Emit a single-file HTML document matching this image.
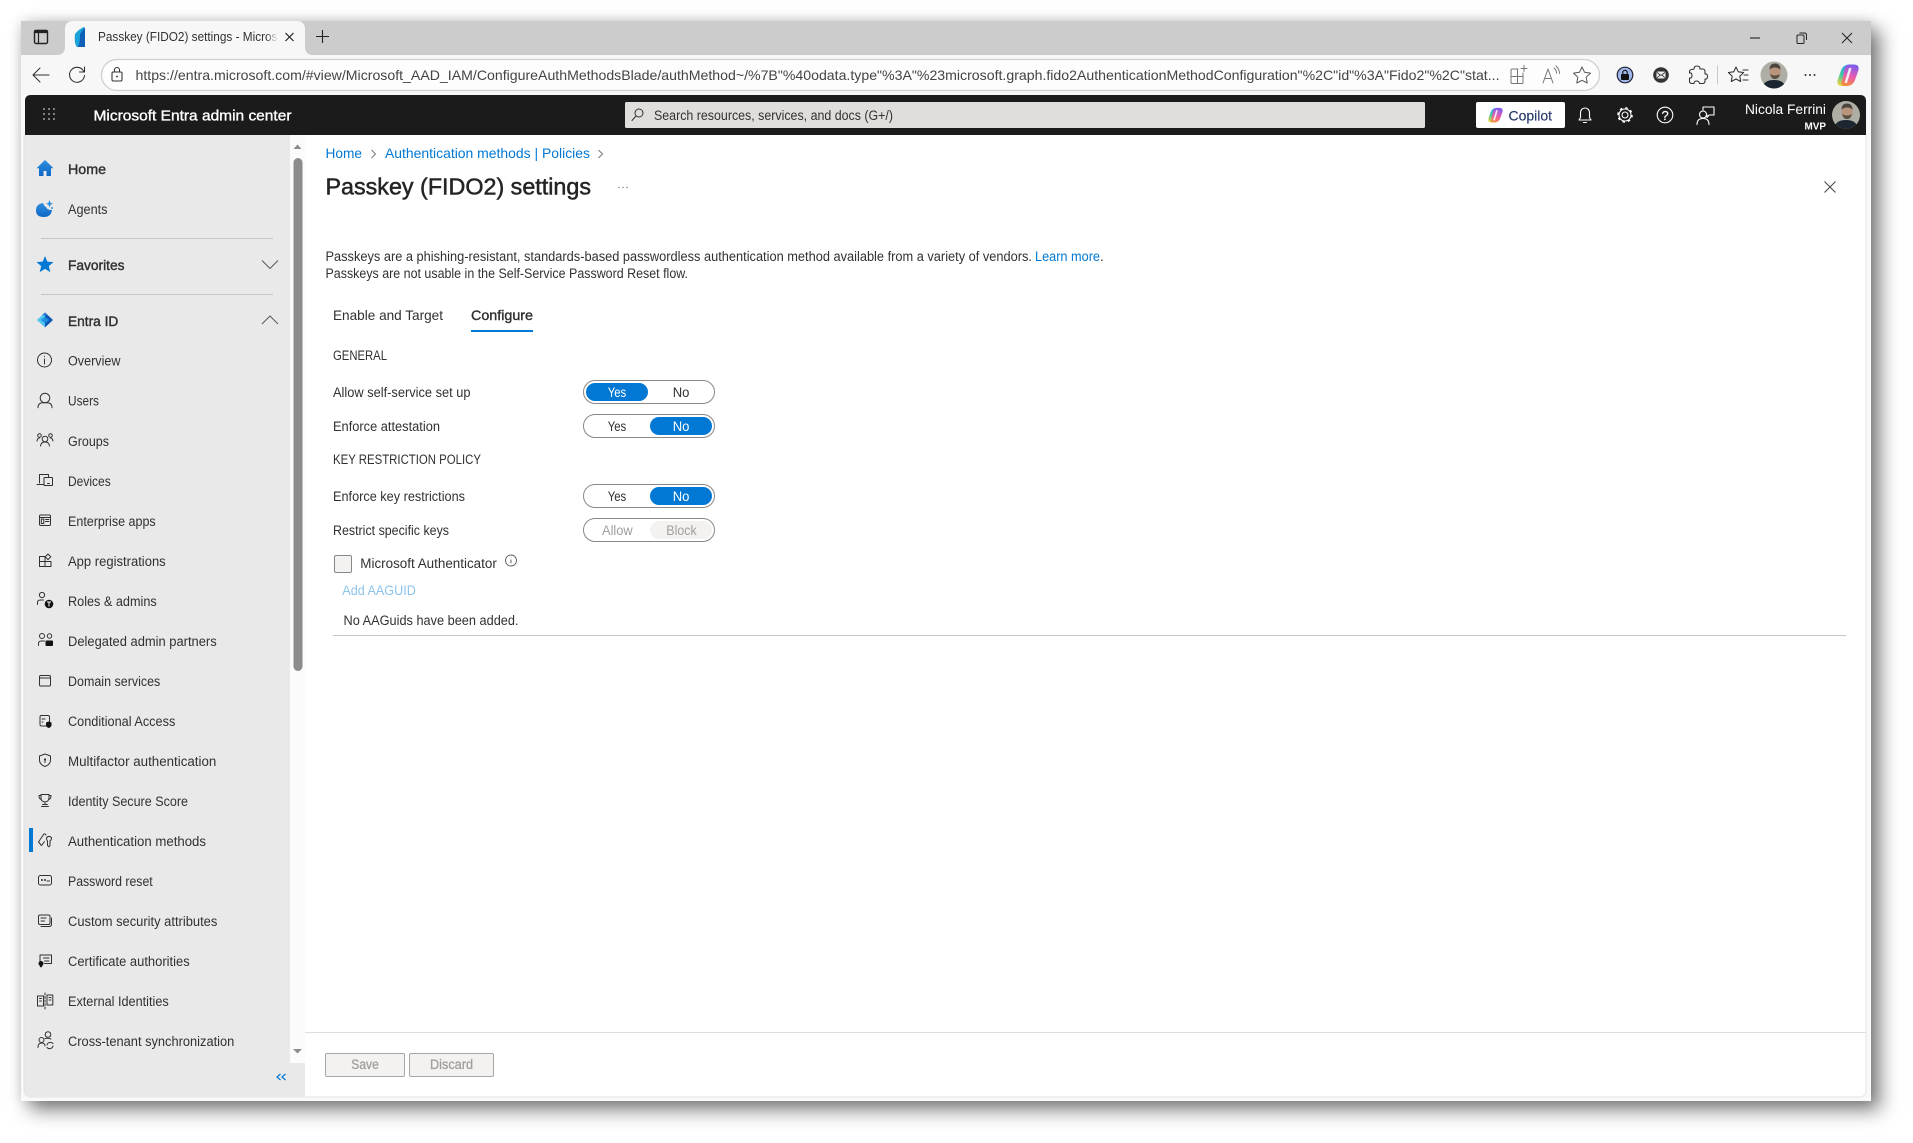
<!DOCTYPE html>
<html lang="en"><head><meta charset="utf-8"><title>Passkey (FIDO2) settings</title>
<style>
html,body{margin:0;padding:0;background:#fff;width:1913px;height:1143px;overflow:hidden}
#win{position:absolute;left:21px;top:21px;width:1850px;height:1080px;background:#f9f9f9;box-shadow:9px 9px 18px rgba(0,0,0,.5),0 0 12px rgba(0,0,0,.14)}
svg{position:absolute;left:0;top:0;display:block}
text{font-family:"Liberation Sans",sans-serif;font-size:13.5px;fill:#323130}
.s{stroke:#323130;stroke-width:.4}
.w{fill:#fff}
.l{fill:#0078d4}
.i{fill:none;stroke:#323130;stroke-width:1;stroke-linecap:round;stroke-linejoin:round}
.wi{fill:none;stroke:#fff;stroke-width:1.1;stroke-linecap:round;stroke-linejoin:round}
.t{fill:none;stroke:#303030;stroke-width:1.05;stroke-linecap:round;stroke-linejoin:round}
</style></head><body>
<div id="win"></div>
<svg width="1913" height="1143" viewBox="0 0 1913 1143" xmlns="http://www.w3.org/2000/svg">
<defs>
<linearGradient id="cp" x1="0.6" y1="0" x2="0.2" y2="1"><stop offset="0" stop-color="#2a9df0"/><stop offset=".55" stop-color="#42c8a0"/><stop offset="1" stop-color="#f2d23c"/></linearGradient>
<linearGradient id="cp2" x1="0.6" y1="0" x2="0.4" y2="1"><stop offset="0" stop-color="#7a5cf0"/><stop offset=".55" stop-color="#e85cb0"/><stop offset="1" stop-color="#f58a3a"/></linearGradient>
<linearGradient id="fade" x1="0" x2="1"><stop offset="0" stop-color="#f7f7f7" stop-opacity="0"/><stop offset="1" stop-color="#f7f7f7"/></linearGradient>
<linearGradient id="hb" x1="0" y1="0" x2="0" y2="1"><stop offset="0" stop-color="#2d8fe0"/><stop offset="1" stop-color="#0f66c4"/></linearGradient>
<clipPath id="a1"><circle cx="1774" cy="75" r="13.5"/></clipPath>
<clipPath id="a2"><circle cx="1846" cy="115" r="14"/></clipPath>
<clipPath id="tb"><rect x="98" y="25" width="180" height="24"/></clipPath>
</defs>

<!-- tab strip -->
<rect x="21" y="21" width="1850" height="34" fill="#cccccc"/>
<path d="M57 55c5 0 8-3 8-8V29c0-5 3-8 8-8h224c5 0 8 3 8 8v18c0 5 3 8 8 8z" fill="#f7f7f7"/>
<rect x="34.500" y="30.500" width="13" height="13" rx="1.500" fill="none" stroke="#222" stroke-width="1.400"/>
<path d="M34.500 32.500h13V31.500q0-1-1-1h-11q-1 0-1 1zM38.500 32v11" fill="#222" stroke="#222" stroke-width="1.200"/>
<path d="M75 34q4-5 9-7v19q-4 1-7 1q-3-3-2-13z" fill="#19a3d8"/>
<path d="M80 34l5-7v20h-8q3-1 3-13z" fill="#0f5fb8"/>
<text x="98" y="41" textLength="179.500" lengthAdjust="spacingAndGlyphs" clip-path="url(#tb)" style="font-size:13px">Passkey (FIDO2) settings - Micros</text>
<rect x="266" y="26" width="12" height="22" fill="url(#fade)"/>
<path d="M285.500 33l8 8M293.500 33l-8 8" fill="none" stroke="#222" stroke-width="1.200"/>
<path d="M322.500 30v13M316 36.500h13" fill="none" stroke="#222" stroke-width="1.100"/>
<path d="M1750 38h10" stroke="#222" stroke-width="1.100" fill="none"/>
<path d="M1797 36v6.500q0 1 1 1h5q1 0 1-1V36q0-1-1-1h-5q-1 0-1 1zM1799.500 33h5q2 0 2 2v5" fill="none" stroke="#222" stroke-width="1"/>
<path d="M1842 33l10 10M1852 33l-10 10" stroke="#222" stroke-width="1" fill="none"/>

<!-- toolbar -->
<rect x="21" y="55" width="1850" height="40" fill="#f7f7f7"/>
<path d="M33 75h16M33 75l7-7M33 75l7 7" class="t"/>
<path d="M83.500 71a7.500 7.500 0 1 0 1 4.500M84.500 67v5h-5" class="t"/>
<rect x="101.500" y="59.500" width="1498" height="31" rx="15.500" fill="#fdfdfd" stroke="#cfcfcf" stroke-width="1.300"/>
<rect x="112" y="72" width="10" height="9" rx="1.200" class="t"/><path d="M114.500 72v-2a2.500 2.500 0 0 1 5 0v2" class="t"/><circle cx="117" cy="76.500" r=".9" fill="#303030"/>
<text x="135.500" y="80" style="font-size:14px;fill:#444" textLength="1364" lengthAdjust="spacingAndGlyphs">https://entra.microsoft.com/#view/Microsoft_AAD_IAM/ConfigureAuthMethodsBlade/authMethod~/%7B"%40odata.type"%3A"%23microsoft.graph.fido2AuthenticationMethodConfiguration"%2C"id"%3A"Fido2"%2C"stat...</text>
<g class="i" style="stroke:#777"><path d="M1523 73v9.500q0 1-1 1h-10q-1 0-1-1V70q0-1 1-1h6M1511 76.500h12M1517.500 69v14.500M1524 65.500v6M1521 68.500h6"/>
<path d="M1543 83l5-14 5 14M1545 78.500h6M1554 68q2.500 2 2.500 5M1556 66q3.500 3 3.500 7.500"/></g>
<path d="M1582 67l2.600 5.300 5.900.8-4.300 4.100 1 5.800-5.200-2.700-5.200 2.700 1-5.800-4.300-4.100 5.900-.8z" class="t" style="stroke:#555;stroke-width:1"/>
<circle cx="1625" cy="75" r="7.800" fill="#9db8e8" stroke="#223" stroke-width="1.200"/><rect x="1621" y="74" width="8" height="6" rx="1" fill="#111"/><path d="M1622.800 74v-1.500a2.200 2.200 0 0 1 4.400 0V74" fill="none" stroke="#111" stroke-width="1.100"/>
<circle cx="1661" cy="75" r="7.800" fill="#333"/><rect x="1656.500" y="71.500" width="9" height="7" rx="1.500" fill="#eee"/><path d="M1657 72.500l4 3 4-3M1657 78l3-3M1665 78l-3-3" stroke="#333" stroke-width=".8" fill="none"/>
<path d="M1694 69q0-3 3-3t3 3h2.500q2.500 0 2.500 2.500V74q2.500-.5 2.500 2.500t-2.500 2.500v2q0 2.500-2.500 2.500h-3q-.5-2.500-3-2.500t-2.500 2.500h-2q-2.500 0-2.500-2.500v-3q2.500 .5 2.500-2.500t-2.500-2.500v-1q0-2.500 2.500-2.500z" class="t"/>
<path d="M1717.500 65.500v19" stroke="#c8c8c8" fill="none"/>
<path d="M1736 67l2.300 4.800 5.300.7-3.800 3.700.9 5.300-4.700-2.500-4.700 2.500.9-5.300-3.800-3.700 5.300-.7zM1743 70h5M1744 75h4M1743 80h5" class="t"/>
<g clip-path="url(#a1)"><rect x="1760" y="61" width="28" height="28" fill="#aeaea4"/><path d="M1762 89q1-9 12-9t12 9z" fill="#1c2630"/><ellipse cx="1775" cy="72" rx="5.500" ry="6.500" fill="#b8957a"/><path d="M1769.500 70q0-6.500 5.500-6.500t5.500 6.500q-1.500-2.500-5.500-2.500t-5.500 2.500z" fill="#4a443e"/><path d="M1770 74q1 5 5 5t5-5q-2 1.500-5 1.500t-5-1.500z" fill="#5a4d42"/></g>
<circle cx="1805.500" cy="75" r="1" fill="#333"/><circle cx="1810" cy="75" r="1" fill="#333"/><circle cx="1814.500" cy="75" r="1" fill="#333"/>
<g id="cop"><path d="M1850 64.500q-7 0-9 6l-3.500 10q-1 5 4 5.500h5q4 0 5-5l3-14q.5-2.500-4.500-2.500z" fill="url(#cp)"/>
<path d="M1846 86q7 0 9-6l3.500-10q1-5-4-5.500h-5q-4 0-5 5l-3 14q-.5 2.500 4.500 2.500z" fill="url(#cp2)"/>
<path d="M1850 69l-4 13" stroke="#fff" stroke-width="2.500" stroke-linecap="round" fill="none" opacity=".85"/></g>

<!-- header -->
<path d="M25 135v-34q0-6 6-6h1829q6 0 6 6v34z" fill="#1b1b1b"/>
<g fill="#c8c8c8"><circle cx="44" cy="109" r=".9"/><circle cx="49" cy="109" r=".9"/><circle cx="54" cy="109" r=".9"/><circle cx="44" cy="114" r=".9"/><circle cx="49" cy="114" r=".9"/><circle cx="54" cy="114" r=".9"/><circle cx="44" cy="119" r=".9"/><circle cx="49" cy="119" r=".9"/><circle cx="54" cy="119" r=".9"/></g>
<text x="93.500" y="120.500" class="w" style="font-size:14.500px;stroke:#fff;stroke-width:.35" textLength="198" lengthAdjust="spacingAndGlyphs">Microsoft Entra admin center</text>
<rect x="625" y="102" width="800" height="26" rx="1.500" fill="#dfdedc"/>
<circle cx="639" cy="113" r="4" class="i"/><path d="M636 116l-4 4.500" class="i"/>
<text x="654" y="120" style="font-size:13.500px" textLength="239" lengthAdjust="spacingAndGlyphs">Search resources, services, and docs (G+/)</text>
<rect x="1476" y="102" width="89" height="26" rx="2" fill="#fff"/>
<g transform="translate(1495.500 115) scale(.68) translate(-1848 -75)"><path d="M1850 64.500q-7 0-9 6l-3.500 10q-1 5 4 5.500h5q4 0 5-5l3-14q.5-2.500-4.500-2.500z" fill="url(#cp)"/>
<path d="M1846 86q7 0 9-6l3.500-10q1-5-4-5.500h-5q-4 0-5 5l-3 14q-.5 2.500 4.500 2.500z" fill="url(#cp2)"/>
<path d="M1850 69l-4 13" stroke="#fff" stroke-width="2.500" stroke-linecap="round" fill="none" opacity=".85"/></g>
<text x="1508.500" y="120.500" style="font-size:14px;fill:#243a6b;stroke:#243a6b;stroke-width:.15" textLength="43.500" lengthAdjust="spacingAndGlyphs">Copilot</text>
<path d="M1579 120h12l-1.500-2.500v-5a4.500 4.500 0 0 0-9 0v5zM1583.500 122.500h3" class="wi"/>
<circle cx="1625" cy="115" r="3" class="wi"/><circle cx="1625" cy="115" r="6" class="wi"/><circle cx="1625" cy="115" r="7" fill="none" stroke="#fff" stroke-width="1.600" stroke-dasharray="2.500 3"/>
<circle cx="1665" cy="115" r="7.800" class="wi"/><text x="1661.500" y="119.800" class="w" style="font-size:13px;stroke:#fff;stroke-width:.2">?</text>
<path d="M1703 107h11v8h-5l-2 2.500V115M1703 107v3" class="wi"/><circle cx="1703" cy="114.500" r="3.500" class="wi"/><path d="M1697 124.500q0-6 6-6t6 6" class="wi"/>
<text x="1745" y="114" class="w" style="font-size:13.500px" textLength="81" lengthAdjust="spacingAndGlyphs">Nicola Ferrini</text>
<text x="1804.500" y="129.500" class="w" style="font-size:10.500px;font-weight:bold" textLength="21.500" lengthAdjust="spacingAndGlyphs">MVP</text>
<g clip-path="url(#a2)"><rect x="1832" y="101" width="28" height="28" fill="#aeaea4"/><path d="M1834 129q1-9 12-9t12 9z" fill="#1c2630"/><ellipse cx="1847" cy="112" rx="5.500" ry="6.500" fill="#b8957a"/><path d="M1841.500 110q0-6.500 5.500-6.500t5.500 6.500q-1.500-2.500-5.500-2.500t-5.500 2.500z" fill="#4a443e"/><path d="M1842 114q1 5 5 5t5-5q-2 1.500-5 1.500t-5-1.500z" fill="#5a4d42"/></g>

<!-- content background -->
<path d="M24 135h1842v955q0 7-7 7H31q-7 0-7-7z" fill="#fff"/>
<path d="M24 135v955q0 7 7 7h1828q7 0 7-7V135" fill="none" stroke="#e4e4e4" stroke-width="1"/>

<!-- sidebar -->
<path d="M24.500 135H290v928h15v34H31q-6.500 0-6.500-7z" fill="#e9e9e9"/>
<rect x="290" y="135" width="15" height="928" fill="#fbfbfb"/>
<path d="M297.500 144.500l4 4.500h-8z" fill="#8c8c8c"/>
<rect x="293.500" y="158" width="9" height="513" rx="4.500" fill="#8c8c8c"/>
<path d="M293 1049h9l-4.500 4.500z" fill="#8c8c8c"/>
<path d="M280.500 1074l-3.500 3 3.500 3M285.500 1074l-3.500 3 3.500 3" fill="none" stroke="#0078d4" stroke-width="1.200"/>

<path d="M45 160l-8.500 8.200h2.500v7.800h4.500v-5h3v5h4.500v-7.800h2.500z" fill="url(#hb)"/>
<text x="68" y="174" class="s" textLength="38" lengthAdjust="spacingAndGlyphs">Home</text>
<path d="M43 203q-7 1-7 7.500q0 6.500 8 6.500q7 0 8-7q-5 0-6-3q-2-1-3-4z" fill="url(#hb)"/><path d="M49.500 200l1 2.800 2.500 1-2.500 1-1 2.800-1-2.800-2.500-1 2.500-1z" fill="#2d8fe0"/><circle cx="52" cy="208" r="1" fill="#2d8fe0"/>
<text x="68" y="214" textLength="39.500" lengthAdjust="spacingAndGlyphs">Agents</text>
<path d="M41 238.500h232" stroke="#c6c6c6" fill="none"/>
<path d="M45 256l2.300 5.600 6.200.5-4.700 4 1.500 6-5.300-3.200-5.300 3.200 1.500-6-4.700-4 6.200-.5z" fill="#0078d4"/>
<text x="68" y="270" class="s" textLength="56.500" lengthAdjust="spacingAndGlyphs">Favorites</text>
<path d="M262 260.500l8 8 8-8" fill="none" stroke="#605e5c" stroke-width="1.100"/>
<path d="M41 294.500h232" stroke="#c6c6c6" fill="none"/>
<path d="M37 320l8-7.500v15z" fill="#4cc3f2"/><path d="M45 312.500l8 7.500-8 7.500z" fill="#0a5bb5"/><path d="M41 320l4-3 4 3-4 3z" fill="#1f8fe0"/><path d="M45 312.500l-3 2.800 6 0z" fill="#2b79d0"/>
<text x="68" y="326" class="s" textLength="50.300" lengthAdjust="spacingAndGlyphs">Entra ID</text>
<path d="M262 324l8-8 8 8" fill="none" stroke="#605e5c" stroke-width="1.100"/>

<circle cx="44.500" cy="360" r="7" class="i"/><path d="M44.500 359v5M44.500 356.200v.3" class="i"/>
<text x="68" y="365.500" textLength="52.500" lengthAdjust="spacingAndGlyphs">Overview</text>
<circle cx="45" cy="398" r="4.800" class="i"/><path d="M38 407.800q0-5 5-5h4q5 0 5 5" class="i"/>
<text x="68" y="405.500" textLength="31" lengthAdjust="spacingAndGlyphs">Users</text>
<circle cx="45" cy="439" r="2.800" class="i"/><circle cx="39.500" cy="435.500" r="1.800" class="i"/><circle cx="50.500" cy="435.500" r="1.800" class="i"/><path d="M40.500 446q.5-4 4.500-4t4.500 4M37 441q.5-3 2.500-3M53 441q-.5-3-2.500-3" class="i"/>
<text x="68" y="446" textLength="41" lengthAdjust="spacingAndGlyphs">Groups</text>
<path d="M39.500 483v-8.500h9v3M37 484.500h7" class="i"/><rect x="44" y="477.500" width="8.500" height="8" rx=".8" class="i"/><path d="M47.500 483.500h2" class="i"/>
<text x="68" y="486" textLength="42.700" lengthAdjust="spacingAndGlyphs">Devices</text>
<rect x="39.500" y="515" width="11" height="10.500" rx="1.200" class="i"/><path d="M39.500 517.500h11" class="i"/><rect x="41.300" y="519" width="2.500" height="4.500" class="i"/><path d="M45.500 519.500h3.500M45.500 521.500h3.500" class="i"/>
<text x="68" y="526" textLength="87.700" lengthAdjust="spacingAndGlyphs">Enterprise apps</text>
<path d="M39.500 556.500h5.500v10h-5.500zM45 561.500h6v5h-6zM39.500 561.500H45M48 554l2.800 2.800-2.800 2.800-2.800-2.800z" class="i"/>
<text x="68" y="566" textLength="97.700" lengthAdjust="spacingAndGlyphs">App registrations</text>
<circle cx="42" cy="595" r="2.600" class="i"/><path d="M37.500 604.500v-2q0-2.500 3-2.500h3" class="i"/><circle cx="49" cy="604" r="4.300" fill="#111"/><path d="M47 602h4M49 602v4.500" stroke="#fff" stroke-width="1" fill="none"/>
<text x="68" y="606" textLength="88.700" lengthAdjust="spacingAndGlyphs">Roles &amp; admins</text>
<circle cx="42" cy="636" r="2.500" class="i"/><circle cx="49.500" cy="636" r="2.200" class="i"/><path d="M38.500 645.500v-2q0-2.500 3-2.500h3" class="i"/><rect x="45.500" y="640.500" width="7.500" height="5.500" rx="1" fill="#111"/>
<text x="68" y="646" textLength="148.700" lengthAdjust="spacingAndGlyphs">Delegated admin partners</text>
<rect x="39.500" y="675.500" width="11" height="10.500" rx="1.300" class="i"/><path d="M39.500 678h11" class="i"/>
<text x="68" y="686" textLength="92.300" lengthAdjust="spacingAndGlyphs">Domain services</text>
<rect x="40" y="715.500" width="9.500" height="10.500" rx="1.500" class="i"/><path d="M42 719h3M42 722h1" class="i"/><path d="M46 722.500l2.800-1 2.700 1v2.500q0 2-2.700 3-2.800-1-2.800-3z" fill="#111"/>
<text x="68" y="726" textLength="107.300" lengthAdjust="spacingAndGlyphs">Conditional Access</text>
<path d="M45 754l5.500 2v4q0 4.500-5.500 6.500-5.500-2-5.500-6.500v-4z" class="i"/><circle cx="45" cy="759.500" r="1.100" fill="#323130"/><path d="M45 760v2.500" class="i"/>
<text x="68" y="766" textLength="148.300" lengthAdjust="spacingAndGlyphs">Multifactor authentication</text>
<path d="M41 794.500h8v3q0 4-4 4.500-4-.5-4-4zM41 795.500h-2q0 3.500 2.300 4M49 795.500h2q0 3.500-2.300 4M45 802v2.500M41.500 806.500h7M42.500 804.500h5" class="i"/>
<text x="68" y="806" textLength="120" lengthAdjust="spacingAndGlyphs">Identity Secure Score</text>
<path d="M38.500 842l5-7.500q1-1.500 2.500.5M41.500 845.500l-3-3.500M41.500 845.500l3-4" class="i"/><path d="M46.500 838a2.700 2.700 0 0 1 5 0q0 2-1.500 3v4.500l-1 1.300-1.500-1.300V841q-1-1-1-3z" class="i"/>
<text x="68" y="846" textLength="138" lengthAdjust="spacingAndGlyphs">Authentication methods</text>
<rect x="29" y="828" width="4" height="24" fill="#0078d4"/>
<rect x="38.500" y="875.500" width="13" height="9.500" rx="2" class="i"/><circle cx="42" cy="880" r="1" fill="#323130"/><circle cx="45" cy="880" r="1" fill="#323130"/><path d="M47 881h2.500" class="i"/>
<text x="68" y="886" textLength="84.700" lengthAdjust="spacingAndGlyphs">Password reset</text>
<rect x="38.500" y="915" width="11.500" height="9.500" rx="1.500" class="i"/><path d="M41 918h5M41 921h3.500M51.500 918v6q0 2.500-2.500 2.500H41" class="i"/>
<text x="68" y="926" textLength="149.300" lengthAdjust="spacingAndGlyphs">Custom security attributes</text>
<path d="M40 963v-8h11.500v8.500H44.500M43.500 958h5.500M44.500 961h4.500" class="i"/><circle cx="41" cy="963.500" r="2.500" fill="#111"/><path d="M39.700 965l.3 2.500 1-.7 1 .7.300-2.500" fill="#111"/>
<text x="68" y="966" textLength="121.700" lengthAdjust="spacingAndGlyphs">Certificate authorities</text>
<rect x="37.500" y="996" width="6" height="10" class="i"/><rect x="47" y="995" width="5.800" height="10" class="i"/><path d="M39.500 998.500h2M39.500 1001h2M49 997.500h2M49 1000h2" class="i"/><path d="M45 993v16" class="i" stroke-dasharray="2 1.500"/>
<text x="68" y="1006" textLength="100.700" lengthAdjust="spacingAndGlyphs">External Identities</text>
<circle cx="48" cy="1034.500" r="2.800" class="i"/><circle cx="41.500" cy="1040" r="2.500" class="i"/><path d="M38 1047.500q0-4.500 3.500-4.500t3.500 3M45 1038.500q3-.7 6 .5" class="i"/><path d="M47 1045a3.500 3.500 0 0 1 6-1.500M53 1046a3.500 3.500 0 0 1-6 1.500" class="i"/>
<text x="68" y="1046" textLength="166.300" lengthAdjust="spacingAndGlyphs">Cross-tenant synchronization</text>

<!-- main -->
<text x="325.500" y="158" class="l" style="font-size:14px" textLength="36.500" lengthAdjust="spacingAndGlyphs">Home</text>
<path d="M371.500 150l4 4-4 4" fill="none" stroke="#777" stroke-width="1"/>
<text x="385" y="158" class="l" style="font-size:14px" textLength="205" lengthAdjust="spacingAndGlyphs">Authentication methods | Policies</text>
<path d="M598.500 150l4 4-4 4" fill="none" stroke="#777" stroke-width="1"/>
<text x="325.500" y="194.500" style="font-size:23.500px;fill:#252423;stroke:#252423;stroke-width:.5" textLength="265.500" lengthAdjust="spacingAndGlyphs">Passkey (FIDO2) settings</text>
<circle cx="619" cy="187.500" r=".7" fill="#777"/><circle cx="623" cy="187.500" r=".7" fill="#777"/><circle cx="627" cy="187.500" r=".7" fill="#777"/>
<path d="M1824.500 181.500l11 11M1835.500 181.500l-11 11" fill="none" stroke="#444" stroke-width="1"/>

<text x="325.500" y="261" textLength="706.500" lengthAdjust="spacingAndGlyphs">Passkeys are a phishing-resistant, standards-based passwordless authentication method available from a variety of vendors.</text>
<text x="1035" y="261" class="l" textLength="65" lengthAdjust="spacingAndGlyphs">Learn more</text><text x="1100" y="261">.</text>
<text x="325.500" y="278" textLength="362.500" lengthAdjust="spacingAndGlyphs">Passkeys are not usable in the Self-Service Password Reset flow.</text>

<text x="333" y="320" style="font-size:14px" textLength="110" lengthAdjust="spacingAndGlyphs">Enable and Target</text>
<text x="471" y="320" class="s" style="font-size:14px" textLength="62" lengthAdjust="spacingAndGlyphs">Configure</text>
<rect x="471" y="330" width="62" height="2" fill="#0078d4"/>

<text x="333" y="360" textLength="54" lengthAdjust="spacingAndGlyphs">GENERAL</text>

<text x="333" y="397" textLength="137.500" lengthAdjust="spacingAndGlyphs">Allow self-service set up</text>
<rect x="583.500" y="380.500" width="131" height="23" rx="11.500" fill="#fff" stroke="#8a8886"/>
<rect x="586" y="383" width="62" height="18" rx="9" fill="#0078d4"/>
<text x="607.700" y="397" class="w" textLength="18.500" lengthAdjust="spacingAndGlyphs">Yes</text>
<text x="672.700" y="397" textLength="16.700" lengthAdjust="spacingAndGlyphs">No</text>

<text x="333" y="431" textLength="107" lengthAdjust="spacingAndGlyphs">Enforce attestation</text>
<rect x="583.500" y="414.500" width="131" height="23" rx="11.500" fill="#fff" stroke="#8a8886"/>
<rect x="650" y="417" width="62" height="18" rx="9" fill="#0078d4"/>
<text x="607.700" y="431" textLength="18.500" lengthAdjust="spacingAndGlyphs">Yes</text>
<text x="672.700" y="431" class="w" textLength="16.700" lengthAdjust="spacingAndGlyphs">No</text>

<text x="333" y="464" textLength="148" lengthAdjust="spacingAndGlyphs">KEY RESTRICTION POLICY</text>

<text x="333" y="501" textLength="132" lengthAdjust="spacingAndGlyphs">Enforce key restrictions</text>
<rect x="583.500" y="484.500" width="131" height="23" rx="11.500" fill="#fff" stroke="#8a8886"/>
<rect x="650" y="487" width="62" height="18" rx="9" fill="#0078d4"/>
<text x="607.700" y="501" textLength="18.500" lengthAdjust="spacingAndGlyphs">Yes</text>
<text x="672.700" y="501" class="w" textLength="16.700" lengthAdjust="spacingAndGlyphs">No</text>

<text x="333" y="535" textLength="116" lengthAdjust="spacingAndGlyphs">Restrict specific keys</text>
<rect x="583.500" y="518.500" width="131" height="23" rx="11.500" fill="#fff" stroke="#8a8886"/>
<rect x="650" y="521" width="62" height="18" rx="9" fill="#f3f2f1"/>
<text x="602" y="535" style="fill:#a19f9d" textLength="30.700" lengthAdjust="spacingAndGlyphs">Allow</text>
<text x="666.300" y="535" style="fill:#a19f9d" textLength="30.400" lengthAdjust="spacingAndGlyphs">Block</text>

<rect x="334.500" y="555.500" width="17" height="17" rx="1.500" fill="#f3f2f1" stroke="#8a8886"/>
<text x="360.300" y="568" textLength="136.500" lengthAdjust="spacingAndGlyphs">Microsoft Authenticator</text>
<circle cx="511" cy="560.500" r="5.500" fill="none" stroke="#605e5c" stroke-width=".9"/><path d="M511 559.500v3.800M511 557.800v.2" fill="none" stroke="#605e5c"/>
<text x="342.300" y="595" style="fill:#8cc3ea" textLength="73.500" lengthAdjust="spacingAndGlyphs">Add AAGUID</text>
<text x="343.500" y="625" textLength="175" lengthAdjust="spacingAndGlyphs">No AAGuids have been added.</text>
<path d="M333 635.500h1513" stroke="#c8c6c4" fill="none"/>

<path d="M305 1032.500h1561" stroke="#e1dfdd" fill="none"/>
<rect x="325.500" y="1053.500" width="79" height="23" rx="1.500" fill="#f3f2f1" stroke="#a8a6a4"/>
<text x="351.300" y="1069" class="s" style="fill:#a19f9d;stroke:#a19f9d;stroke-width:.3" textLength="27.500" lengthAdjust="spacingAndGlyphs">Save</text>
<rect x="409.500" y="1053.500" width="84" height="23" rx="1.500" fill="#f3f2f1" stroke="#a8a6a4"/>
<text x="430" y="1069" class="s" style="fill:#a19f9d;stroke:#a19f9d;stroke-width:.3" textLength="43" lengthAdjust="spacingAndGlyphs">Discard</text>
</svg>
</body></html>
